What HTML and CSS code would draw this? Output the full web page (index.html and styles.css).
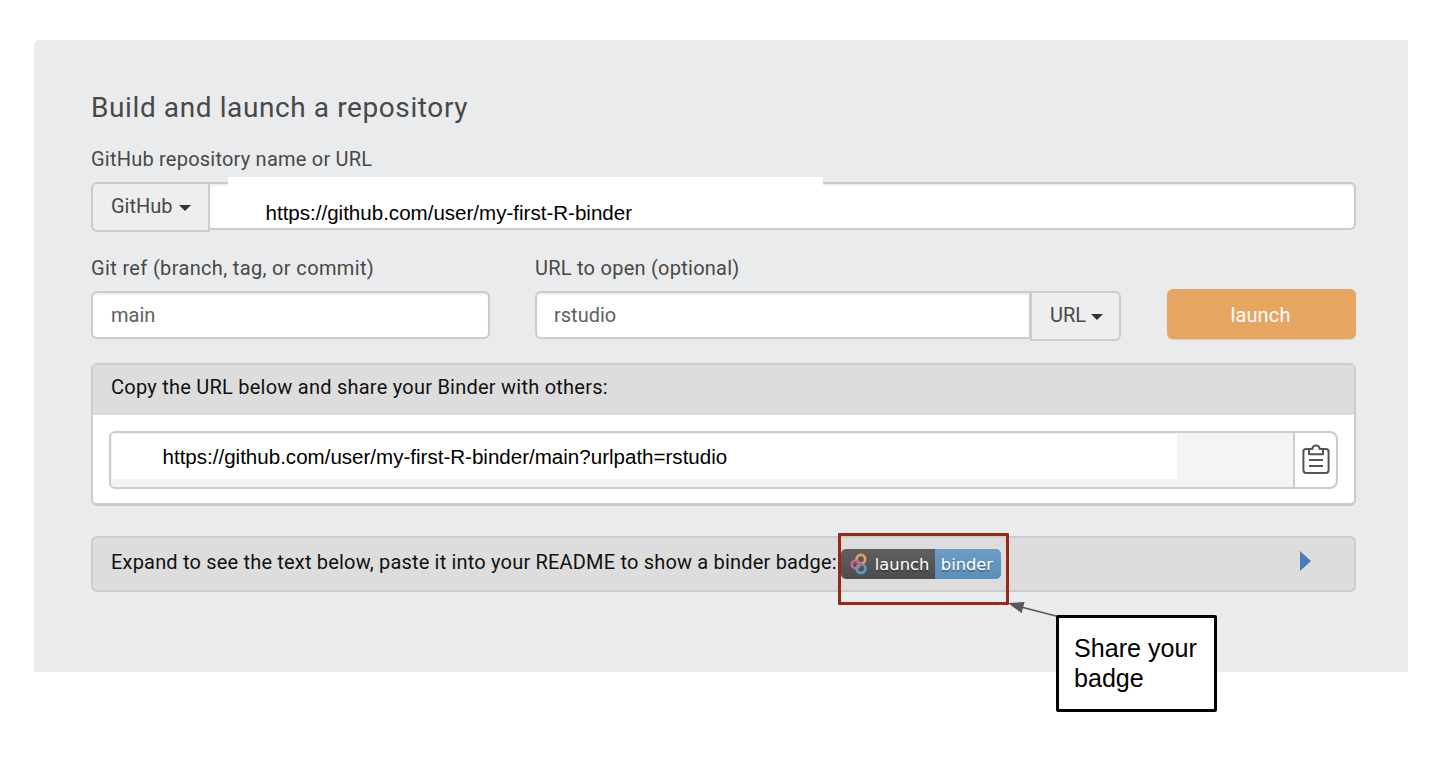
FILE: index.html
```html
<!DOCTYPE html>
<html lang="en">
<head>
<meta charset="utf-8">
<title>Binder</title>
<link rel="stylesheet" href="styles.css">
</head>
<body>
<main class="panel">
  <h1 class="title">Build and launch a repository</h1>
  <form class="form">
    <div class="label label-repo">GitHub repository name or URL</div>
    <div class="group">
      <div class="addon addon-left"><span class="t-github">GitHub</span><i class="caret"></i></div>
      <div class="input input-repo"><div class="patch patch-repo">https://github.com/user/my-first-R-binder</div></div>
    </div>
    <div class="row">
      <div class="col-ref">
        <div class="label label-ref">Git ref (branch, tag, or commit)</div>
        <div class="input input-ref">main</div>
      </div>
      <div class="col-path">
        <div class="label label-path">URL to open (optional)</div>
        <div class="group">
          <div class="input input-path">rstudio</div>
          <div class="addon addon-right"><span class="t-url">URL</span><i class="caret"></i></div>
        </div>
      </div>
      <div class="launch">launch</div>
    </div>
  </form>
  <section class="card share">
    <div class="card-head"><span class="t-copy">Copy the URL below and share your Binder with others:</span></div>
    <div class="card-body">
      <div class="url"><div class="patch patch-url">https://github.com/user/my-first-R-binder/main?urlpath=rstudio</div></div>
      <div class="copy">
        <svg width="28" height="31" viewBox="0 0 28 31" fill="none" stroke="#555" stroke-width="2" stroke-linejoin="round">
          <path d="M7 5H4Q1.4 5 1.4 7.6V26Q1.4 29 4.4 29H23.6Q26.6 29 26.6 26V7.6Q26.6 5 24 5H21"/>
          <path d="M7 5V10.3H21V5H17.6C17.6 0.2 10.4 0.2 10.4 5Z"/>
          <path d="M7 16H21M7 22H21"/>
        </svg>
      </div>
    </div>
  </section>
  <section class="card readme">
    <span class="t-expand">Expand to see the text below, paste it into your README to show a binder badge:</span>
    <span class="badge">
      <span class="badge-left">
        <svg width="18" height="22" viewBox="0 0 18 22" fill="none" stroke-width="2.7">
          <circle cx="5.6" cy="11.4" r="3.9" stroke="#cf6583"/>
          <circle cx="10.9" cy="6.2" r="4.3" stroke="#e3a061"/>
          <circle cx="11" cy="15.6" r="4.4" stroke="#6397c4"/>
          <path d="M5.6 7.5A3.9 3.9 0 0 1 9.2 12.9" stroke="#cf6583"/>
        </svg>
        <span class="t-badge1">launch</span>
      </span>
      <span class="badge-right">binder</span>
    </span>
    <i class="expand"></i>
  </section>
</main>
<div class="highlight"></div>
<svg class="arrow" width="52" height="20" viewBox="0 0 52 20">
  <path d="M14 5L51 14.5" stroke="#595959" stroke-width="1.7"/>
  <path d="M1 1L17.5 0L14.6 11.2Z" fill="#595959"/>
</svg>
<div class="callout">Share your badge</div>
</body>
</html>
```
FILE: styles.css
```css
* { box-sizing: border-box; }
body {
  margin: 0;
  padding: 40px 38px 0 34px;
  height: 762px;
  background: #fff;
  font: 20px/28px Roboto, sans-serif;
  color: #484848;
  overflow: hidden;
  white-space: nowrap;
}
.panel {
  height: 632px;
  padding: 48px 52px 0 57px;
  background: #eaebed;
  border-radius: 5px 0 0 0;
}
.title { margin: 0; font-size: 28px; line-height: 40px; font-weight: 400; letter-spacing: 0.6px; }
.label { height: 28px; letter-spacing: 0.3px; }
.label-repo { margin: 17px 0 9px; letter-spacing: 0.22px; }
.label-ref { letter-spacing: 0.35px; }
.label-path { letter-spacing: 0.25px; }
.group { display: flex; align-items: flex-start; }
.addon {
  display: flex;
  align-items: center;
  gap: 6px;
  height: 50px;
  padding: 0 18px 2px;
  border: 2px solid #ccc;
  background: #eee;
}
.addon-left { width: 119px; border-radius: 6px 0 0 6px; }
.addon-right { width: 91px; margin-left: -1px; padding-left: 18px; gap: 5px; border-radius: 0 6px 6px 0; }
.caret { border: 6px solid transparent; border-top: 6px solid #333; border-bottom: 0; margin-top: 3px; }
.input {
  height: 48px;
  line-height: 44px;
  padding-left: 18px;
  border: 2px solid #ccc;
  border-radius: 6px;
  background: #fff;
  box-shadow: inset 0 2px 2px rgba(0,0,0,.07);
  color: #606060;
  letter-spacing: 0;
}
.input-repo { flex: 1; border-left: 0; padding-left: 18px; border-radius: 0 6px 6px 0; }
.patch { background: #fff; color: #000; font-family: "Liberation Sans", Arial, sans-serif; font-size: 20.55px; letter-spacing: 0; }
.patch-repo { width: 595px; height: 51px; margin-top: -7px; padding: 14px 0 0 37.5px; line-height: 44px; }
.row { display: flex; margin-top: 22px; }
.col-ref { width: 399px; margin-right: 45px; }
.col-path { width: 586px; margin-right: 46px; }
.row .label { margin-bottom: 9px; }
.input-path { width: 497px; padding-left: 17px; border-radius: 6px 0 0 6px; }
.launch {
  width: 189px;
  height: 50px;
  margin-top: 35px;
  padding-right: 2px;
  border-radius: 6px;
  background: #e7a562;
  box-shadow: 0 1px 1px rgba(0,0,0,.12);
  color: #fff;
  text-align: center;
  line-height: 52px;
  letter-spacing: 0.15px;
}
.card { border: 2px solid #ccc; border-radius: 6px; background: #ddd; color: #111; }
.share { height: 143px; margin-top: 22px; border-bottom-width: 3px; background: #fff; }
.card-head { height: 50px; padding: 0 18px; line-height: 45px; background: #ddd; letter-spacing: 0.24px; }
.card-body { display: flex; padding: 16px 16px 0; }
.url { width: 1187px; height: 58px; padding: 1px 1px 0; border: 2px solid #ccc; border-radius: 6px 0 0 6px; background: #f4f4f4; }
.patch-url { width: 1065px; height: 45px; padding-left: 50.5px; line-height: 46px; }
.copy { display: flex; align-items: center; justify-content: center; width: 45px; height: 58px; margin-left: -3px; padding-bottom: 2px; border: 2px solid #ccc; border-radius: 0 8px 8px 0; background: #fff; }
.readme { display: flex; height: 56px; margin-top: 30px; padding: 11px 43px 0 18px; }
.t-expand { margin-top: -1px; letter-spacing: 0.185px; }
.badge { display: flex; height: 30px; margin-left: 4px; border-radius: 5px; overflow: hidden; color: #fff; font: 16.3px/31px "DejaVu Sans", sans-serif; text-shadow: 0 1.5px 0 rgba(0,0,0,.3); }
.badge-left { display: flex; align-items: center; gap: 7px; width: 94px; padding-left: 9px; background: linear-gradient(#606060, #4c4c4c); }
.badge-left svg { flex: none; }
.badge-right { width: 66px; padding-left: 6px; background: linear-gradient(#6c9dc6, #5a8db8); }
.expand { margin: 2px 0 0 auto; height: 20px; border: 10px solid transparent; border-left: 11px solid #477dba; border-right: 0; }
.highlight { position: absolute; left: 838px; top: 533px; width: 171px; height: 72px; border: 3px solid #992815; border-radius: 1px; }
.arrow { position: absolute; left: 1007px; top: 602px; }
.callout { position: absolute; left: 1056px; top: 615px; width: 161px; height: 97px; padding: 15px; border: 3px solid #000; border-radius: 2px; background: #fff; color: #000; font: 25.1px/30px "Liberation Sans", Arial, sans-serif; white-space: normal; }
```
